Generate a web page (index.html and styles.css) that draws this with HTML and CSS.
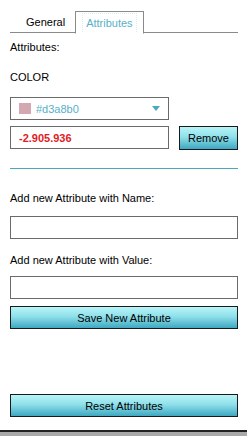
FILE: index.html
```html
<!DOCTYPE html>
<html lang="en">
<head>
    <meta charset="UTF-8">
    <meta name="viewport" content="width=device-width, initial-scale=1.0">
    <title>Attributes</title>
    <link rel="stylesheet" href="styles.css">
</head>
<body>

    <div class="panel">
        <!-- Tabs -->
        <div class="tabs">
            <div class="tab">General</div>
            <div class="tab active"><span>Attributes</span></div>
        </div>

        <div class="label first">Attributes:</div>

        <div class="label attr-name">COLOR</div>
        <div class="select">
            <span class="swatch"></span>
            <span class="select-text">#d3a8b0</span>
            <span class="arrow"></span>
        </div>
        <div class="value-row">
            <input type="text" class="value-input" value="-2.905.936">
            <button class="btn btn-small">Remove</button>
        </div>

        <div class="divider"></div>

        <!-- New attribute -->
        <div class="label new-name">Add new Attribute with Name:</div>
        <input type="text" class="field name-field">
        <div class="label new-value">Add new Attribute with Value:</div>
        <input type="text" class="field value-field">
        <button class="btn btn-wide save">Save New Attribute</button>

        <button class="btn btn-wide reset">Reset Attributes</button>
    </div>

    <div class="footer"></div>

</body>
</html>
```

FILE: styles.css
```css
body {
    margin: 0;
    font-family: "Liberation Sans", Arial, sans-serif;
    font-size: 11px;
    color: #000;
    background-color: #fff;
    height: 436px;
    overflow: hidden;
}
.panel {
    padding: 11px 9px 0 10px;
}
.tabs {
    display: flex;
    height: 21px;
    padding-left: 6px;
    border-bottom: 1px solid #8a8a8a;
}
.tab {
    padding: 1px 10px 0;
    line-height: 20px;
    color: #000;
}
.tab.active {
    padding: 1px 6px 0;
    border: 1px solid #8a8a8a;
    border-bottom: 1px solid #fff;
    margin-bottom: -1px;
    height: 20px;
    background-color: #fff;
    color: #55b1c9;
}
.tab.active span {
    display: block;
    height: 18px;
    line-height: 19px;
    padding: 0 3px;
    border: 1px dotted #dcebf0;
    border-bottom: none;
}
.label {
    line-height: 13px;
}
.first {
    margin-top: 8px;
}
.attr-name {
    margin-top: 17px;
}
.select {
    display: flex;
    align-items: center;
    box-sizing: border-box;
    width: 159px;
    height: 23px;
    margin-top: 13px;
    padding: 0 8px;
    border: 1px solid #6a6a6a;
}
.swatch {
    width: 12px;
    height: 11px;
    background-color: #d3a8b0;
    margin-right: 5px;
    margin-top: -1px;
}
.select-text {
    flex: 1;
    color: #55b1c9;
}
.arrow {
    width: 0;
    height: 0;
    border-left: 4px solid transparent;
    border-right: 4px solid transparent;
    border-top: 5px solid #4aa8c0;
    margin-right: 0px;
}
.value-row {
    display: flex;
    margin-top: 6px;
}
.value-input {
    box-sizing: border-box;
    width: 159px;
    height: 23px;
    margin: 0;
    padding: 0 8px;
    border: 1px solid #6a6a6a;
    font-family: inherit;
    font-size: 11px;
    font-weight: bold;
    color: #e01b24;
    outline: none;
}
.btn {
    box-sizing: border-box;
    height: 23px;
    padding: 0;
    border: 1px solid #1a1a1a;
    background: linear-gradient(#b8f4f8, #8fe0ea 45%, #3ea8c1);
    font-family: inherit;
    font-size: 11px;
    color: #000;
    cursor: pointer;
}
.btn-small {
    width: 59px;
    margin-left: 10px;
    height: 24px;
}
.btn-wide {
    display: block;
    width: 228px;
}
.divider {
    margin-top: 18px;
    border-top: 1px solid #4aa8bd;
}
.new-name {
    margin-top: 23px;
}
.field {
    display: block;
    box-sizing: border-box;
    width: 228px;
    height: 23px;
    margin: 11px 0 0;
    border: 1px solid #6a6a6a;
    outline: none;
}
.new-value {
    margin-top: 15px;
}
.value-field {
    margin-top: 9px;
}
.save {
    margin-top: 7px;
}
.reset {
    margin-top: 65px;
}
.footer {
    margin-top: 13px;
    border-top: 2px solid #222;
    height: 10px;
    background-color: #a9a9a9;
}
```
